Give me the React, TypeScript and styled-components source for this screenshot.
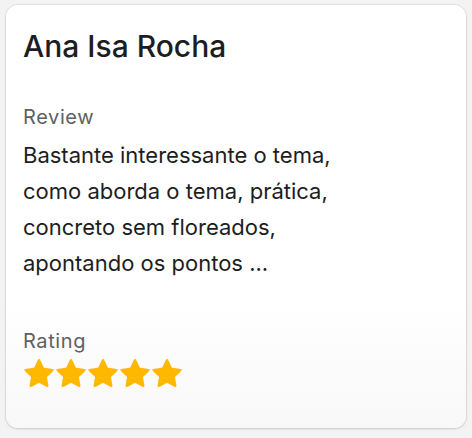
import React from "react";
import styled, { createGlobalStyle } from "styled-components";

const GlobalStyle = createGlobalStyle`
  html, body {
    margin: 0;
    padding: 0;
    background: #f3f3f3;
  }
  body {
    font-family: "Inter", "Roboto", "Liberation Sans", sans-serif;
    -webkit-font-smoothing: antialiased;
  }
`;

const Page = styled.div`
  padding: 5px 6px;
  width: 472px;
  height: 438px;
  box-sizing: border-box;
`;

const Card = styled.div`
  // review card
  width: 460px;
  height: 423px;
  box-sizing: border-box;
  padding: 23px 17px;
  border-radius: 12px;
  background: linear-gradient(180deg, #ffffff 0%, #ffffff 70%, #f8f8f8 100%);
  box-shadow: 0 0 0 1px rgba(0, 0, 0, 0.06), 0 1px 3px rgba(0, 0, 0, 0.12);
  display: flex;
  flex-direction: column;
`;

const Name = styled.h2`
  margin: 0;
  font-size: 30px;
  font-weight: 500;
  line-height: 36px;
  color: #1d1d1f;
`;

const Section = styled.div<{ gap: number }>`
  margin-top: ${(props) => props.gap}px;
  display: flex;
  flex-direction: column;
`;

const Label = styled.div`
  font-size: 20px;
  line-height: 26px;
  letter-spacing: 0.6px;
  color: #5f5f63;
`;

const Body = styled.p`
  margin: 7px 0 0;
  font-size: 22px;
  line-height: 36px;
  color: #1d1d1f;
`;

const Stars = styled.div`
  display: flex;
  margin-top: 4px;
`;

const StarIcon = () => (
  <svg width="32" height="32" viewBox="1 1 22 22">
    <path
      d="M12 2.6l2.85 5.78 6.38.93-4.62 4.5 1.09 6.35L12 17.17l-5.7 2.99 1.09-6.35-4.62-4.5 6.38-.93z"
      fill="#ffb800"
      stroke="#ffb800"
      strokeWidth="1.6"
      strokeLinejoin="round"
    />
  </svg>
);

export default function App() {
  return (
    <Page>
      <GlobalStyle />
      <Card>
        <Name>Ana Isa Rocha</Name>
        <Section gap={40}>
          <Label>Review</Label>
          <Body>
            Bastante interessante o tema,
            <br />
            como aborda o tema, prática,
            <br />
            concreto sem floreados,
            <br />
            apontando os pontos ...
          </Body>
        </Section>
        <Section gap={47}>
          <Label>Rating</Label>
          <Stars>
            {[0, 1, 2, 3, 4].map((i) => (
              <StarIcon key={i} />
            ))}
          </Stars>
        </Section>
      </Card>
    </Page>
  );
}
